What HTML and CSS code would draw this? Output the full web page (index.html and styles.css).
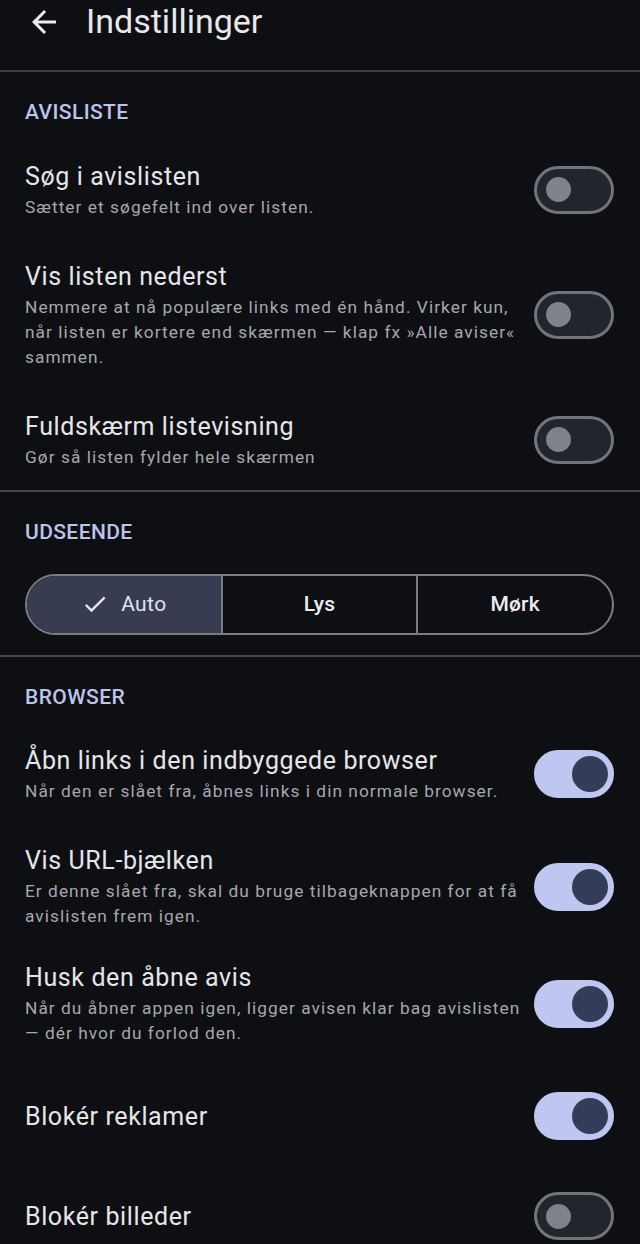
FILE: index.html
```html
<!DOCTYPE html>
<html lang="da">
<head>
<meta charset="utf-8">
<title>Indstillinger</title>
<link rel="stylesheet" href="styles.css">
</head>
<body>
<header class="topbar">
  <svg class="back" viewBox="0 0 24 24" width="36" height="36" aria-hidden="true"><path d="M20 11H7.83l5.59-5.59L12 4l-8 8 8 8 1.41-1.41L7.83 13H20v-2z" fill="currentColor"/></svg>
  <h1 class="title">Indstillinger</h1>
</header>

<section class="section">
  <h2 class="section-title">AVISLISTE</h2>
  <div class="row">
    <div class="text"><div class="label">Søg i avislisten</div><div class="desc">Sætter et søgefelt ind over listen.</div></div>
    <span class="switch"><span class="thumb"></span></span>
  </div>
  <div class="row">
    <div class="text"><div class="label">Vis listen nederst</div><div class="desc">Nemmere at nå populære links med én hånd. Virker kun, når listen er kortere end skærmen — klap fx »Alle aviser« sammen.</div></div>
    <span class="switch"><span class="thumb"></span></span>
  </div>
  <div class="row">
    <div class="text"><div class="label">Fuldskærm listevisning</div><div class="desc">Gør så listen fylder hele skærmen</div></div>
    <span class="switch"><span class="thumb"></span></span>
  </div>
</section>

<section class="section">
  <h2 class="section-title">UDSEENDE</h2>
  <div class="segmented">
    <button class="seg seg-on"><svg class="check" viewBox="0 0 24 24" width="28" height="28" aria-hidden="true"><path d="M9 16.17L4.83 12l-1.42 1.41L9 19 21 7l-1.41-1.41z" fill="currentColor"/></svg>Auto</button>
    <button class="seg">Lys</button>
    <button class="seg">Mørk</button>
  </div>
</section>

<section class="section last">
  <h2 class="section-title">BROWSER</h2>
  <div class="row">
    <div class="text"><div class="label">Åbn links i den indbyggede browser</div><div class="desc">Når den er slået fra, åbnes links i din normale browser.</div></div>
    <span class="switch on"><span class="thumb"></span></span>
  </div>
  <div class="row tight">
    <div class="text"><div class="label">Vis URL-bjælken</div><div class="desc">Er denne slået fra, skal du bruge tilbageknappen for at få avislisten frem igen.</div></div>
    <span class="switch on"><span class="thumb"></span></span>
  </div>
  <div class="row">
    <div class="text"><div class="label">Husk den åbne avis</div><div class="desc">Når du åbner appen igen, ligger avisen klar bag avislisten — dér hvor du forlod den.</div></div>
    <span class="switch on"><span class="thumb"></span></span>
  </div>
  <div class="row single">
    <div class="text"><div class="label">Blokér reklamer</div></div>
    <span class="switch on"><span class="thumb"></span></span>
  </div>
  <div class="row single">
    <div class="text"><div class="label">Blokér billeder</div></div>
    <span class="switch"><span class="thumb"></span></span>
  </div>
</section>
</body>
</html>
```

FILE: styles.css
```css
* { box-sizing: border-box; }
html, body { margin: 0; padding: 0; }
body {
  background: #0e0f13;
  color: #e4e4e8;
  font-family: Roboto, "Noto Sans", sans-serif;
  width: 640px;
  height: 1244px;
  overflow: hidden;
}
.topbar {
  height: 72px;
  display: flex;
  align-items: flex-start;
  padding-left: 26px;
  border-bottom: 2px solid #3c3d42;
}
.back {
  color: #ececf0;
  margin-top: 4px;
  flex: none;
}
.title {
  margin: 0 0 0 24px;
  font-size: 34px;
  font-weight: 400;
  line-height: 42px;
  color: #e8e8ec;
}
.section {
  border-bottom: 2px solid #45464b;
}
.section.last { border-bottom: none; }
.section-title {
  margin: 0;
  padding: 27px 25px 14.5px;
  font-size: 21px;
  line-height: 26px;
  font-weight: 500;
  letter-spacing: 0.4px;
  color: #bcc4ec;
}
.row {
  display: flex;
  align-items: center;
  padding: 20px 26px 20px 25px;
}
.row.tight { padding-bottom: 12px; }
.row.single { min-height: 100px; }
.text { flex: 1; min-width: 0; padding-right: 4px; }
.label {
  font-size: 25px;
  line-height: 33px;
  color: #e6e6ea;
  letter-spacing: 0.6px;
}
.desc {
  font-size: 17.3px;
  line-height: 25px;
  color: #a6a7ae;
  letter-spacing: 1.05px;
  margin-top: 2px;
}
.switch {
  flex: none;
  width: 80px;
  height: 48px;
  border-radius: 24px;
  border: 3px solid #72747c;
  background: #23252c;
  display: flex;
  align-items: center;
  padding-left: 9px;
}
.thumb {
  width: 25px;
  height: 25px;
  border-radius: 50%;
  background: #7f828b;
}
.switch.on {
  background: #bfc7f1;
  border-color: #bfc7f1;
  padding-left: 0;
  justify-content: flex-end;
  padding-right: 3px;
}
.switch.on .thumb {
  width: 36px;
  height: 36px;
  background: #343c58;
}
.segmented {
  display: flex;
  margin: 14.5px 26px 20px 25px;
  height: 61px;
  border: 2px solid #7c7d84;
  border-radius: 31px;
  overflow: hidden;
}
.seg {
  flex: 1;
  border: none;
  background: transparent;
  color: #ececf0;
  font-family: Roboto, "Noto Sans", sans-serif;
  font-size: 21px;
  font-weight: 500;
  letter-spacing: 0.2px;
  display: flex;
  align-items: center;
  justify-content: center;
  padding: 0;
}
.seg + .seg { border-left: 2px solid #7c7d84; }
.seg-on {
  background: #383c51;
  color: #dfe2f2;
  font-weight: 400;
  letter-spacing: 0.4px;
}
.check {
  margin-right: 12px;
  color: #dfe2f2;
  flex: none;
}
```
